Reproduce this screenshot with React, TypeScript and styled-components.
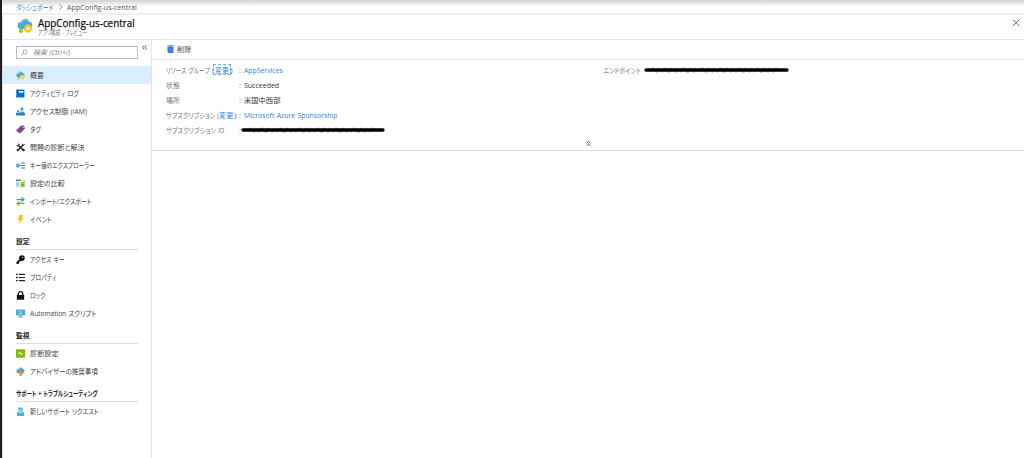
import React, { useLayoutEffect, useRef, useState } from 'react';
import styled, { createGlobalStyle, css } from 'styled-components';

const GlobalStyle = createGlobalStyle`
  * {
    box-sizing: border-box;
  }

  body {
    margin: 0;
    background: #fff;
    color: #444;
    font-family: 'Open Sans', 'Noto Sans CJK JP', sans-serif;
    font-size: 7.4px;
    line-height: 10px;
    font-feature-settings: 'palt';
    word-spacing: 0.6px;
    overflow: hidden;
  }
`;

const FitBox = styled.span<{ $width: number }>`
  display: block;
  flex: none;
  width: ${({ $width }) => $width}px;
  white-space: nowrap;
`;

const FitText = styled.span`
  display: inline-block;
  transform-origin: 0 50%;
`;

type FitProps = {
  width: number,
  children: React.ReactNode,
};

function Fit ({ children, width }: FitProps) {
  const ref = useRef<HTMLSpanElement>(null);
  const [scale, setScale] = useState(1);

  useLayoutEffect(() => {
    if (ref.current) {
      setScale(width / ref.current.offsetWidth);
    }
  }, [width]);

  return (
    <FitBox $width={width}>
      <FitText
        ref={ref}
        style={{ transform: `scaleX(${scale})` }}
      >
        {children}
      </FitText>
    </FitBox>
  );
}

const Page = styled.div`
  display: flex;
  flex-direction: column;
  height: 458px;
  border-left: 2px solid #1f1f21;
  box-shadow: inset 1px 0 0 #ddd;
`;

const Breadcrumb = styled.nav`
  display: flex;
  align-items: center;
  height: 15px;
  padding: 1px 0 0 14px;
  border-bottom: 2px solid #efefef;
  background: linear-gradient(#d6d6d6, #dedede 2px, #fff 6px);
  color: #555;

  svg {
    margin: 0 4px 0 5px;
  }
`;

const Link = styled.a`
  color: #2f80ea;
`;

const ChangeLink = styled(Link)<{ $focused?: boolean }>`
  ${({ $focused }) => $focused && css`
    height: 9px;
    padding: 0 1px;
    outline: 1px dashed #58bdea;
    outline-offset: -0.5px;
  `}
`;

const Header = styled.header`
  display: flex;
  height: 25px;
  padding: 3px 3px 0 15px;
  border-bottom: 1px solid #e4e4e4;
`;

const Titles = styled.div`
  flex: 1;
  margin: -1px 0 0 4.5px;
`;

const Title = styled.h1`
  margin: 0;
  color: #111;
  font-size: 10.4px;
  font-weight: 500;
  line-height: 12px;
  -webkit-text-stroke: 0.25px #111;
`;

const SubTitle = styled.div`
  color: #777;
  font-size: 6.3px;
  line-height: 7px;
`;

const Body = styled.div`
  display: flex;
  flex: 1;
  min-height: 0;
`;

const Sidebar = styled.aside`
  width: 150px;
  border-right: 1px solid #e4e4e4;
`;

const SearchRow = styled.div`
  display: flex;
  align-items: flex-start;
  height: 26px;
  padding: 6px 0 0 14px;

  > svg {
    margin: -2px 0 0 3px;
  }
`;

const SearchBox = styled.div`
  display: flex;
  align-items: center;
  width: 122px;
  height: 13px;
  padding-left: 4px;
  border: 1px solid #bdbdbd;
  color: #808080;
  font-size: 7px;
  font-style: italic;

  svg {
    margin-right: 5px;
  }
`;

const NavItem = styled.div<{ $active?: boolean }>`
  display: flex;
  align-items: center;
  gap: 5px;
  height: 18px;
  margin-left: 1px;
  padding-left: 12.5px;
  background: ${({ $active }) => $active ? '#daeeff' : 'transparent'};
`;

const NavHeading = styled.h2`
  height: 22px;
  margin: 0 13px 0 14px;
  padding-top: 9px;
  border-bottom: 1px solid #dedede;
  color: #222;
  font-size: 7px;
  font-weight: 700;
`;

const Main = styled.main`
  flex: 1;
`;

const Toolbar = styled.div`
  display: flex;
  align-items: center;
  gap: 3.5px;
  height: 20px;
  padding: 0 0 1px 14.5px;
  border-bottom: 1px solid #e4e4e4;
`;

const Essentials = styled.section`
  height: 91px;
  border-bottom: 1px solid #e0e0e0;
`;

const Columns = styled.div`
  display: grid;
  grid-template-columns: 437px 1fr;
  align-content: start;
  height: 80px;
  padding: 2px 0 0 14px;
`;

const Property = styled.div`
  display: flex;
  align-items: center;
  height: 15.1px;
`;

const PropertyLabel = styled.div<{ $width: number }>`
  display: flex;
  width: ${({ $width }) => $width}px;
  color: #777;
`;

const Colon = styled.span`
  width: 5px;
  color: #777;
`;

const PropertyValue = styled.div`
  color: #333;
`;

const RedactedValue = styled(PropertyValue)<{ $shift?: number }>`
  margin-left: ${({ $shift = 0 }) => $shift}px;
  padding-top: 1px;
`;

const CollapseRow = styled.div`
  display: flex;
  justify-content: center;
`;

function Cloud () {
  return (
    <>
      <path
        d='M4 11a3.500 3.500 0 0 1 0-7 4.600 4.600 0 0 1 8.600-.3A3.800 3.800 0 0 1 12.500 11z'
        fill='#4aa9d6'
      />
      <path
        d='M4 6a4.500 4.500 0 0 1 8-2.300'
        fill='none'
        stroke='#80cbe6'
      />
    </>
  );
}

function AppConfigIcon ({ size }: { size: number }) {
  return (
    <svg
      height={size}
      viewBox='0 0 16 16'
      width={size}
    >
      <Cloud />
      <circle
        cx='11'
        cy='10.500'
        fill='none'
        r='2.600'
        stroke='#f7c51e'
        strokeWidth='2.100'
      />
      <circle
        cx='11'
        cy='10.500'
        fill='#fff'
        r='1.600'
      />
      <circle
        cx='11'
        cy='10.500'
        fill='none'
        r='3.900'
        stroke='#f7c51e'
        strokeDasharray='1.530'
        strokeWidth='1.200'
      />
      <circle
        cx='4'
        cy='13'
        fill='#fff'
        r='1.300'
        stroke='#7fba00'
        strokeWidth='1.500'
      />
    </svg>
  );
}

const icons: Record<string, React.ReactNode> = {
  log: (
    <>
      <path d='M1 1h14v14H1z' fill='#0072c6' />
      <path d='M5 3.500h8v3H5z' fill='#fff' />
      <path d='M2 1v14' stroke='#0058a5' strokeWidth='2' />
    </>
  ),
  access: (
    <>
      <circle cx='10.500' cy='3.500' fill='#2d9bd0' r='2.800' />
      <path d='M6 11c0-5 9-5 9 0v3H6z' fill='#2d9bd0' />
      <circle cx='3.500' cy='7.500' fill='#2d9bd0' r='2' />
      <path d='M0 15v-3c0-3 6-3 7 0l9-1v4z' fill='#1883bd' />
      <path d='M9 7l1.500 3L12 7z' fill='#fff' />
    </>
  ),
  tag: (
    <>
      <path d='M8.500 1.500L14 1l2 5-8.500 9L0 10z' fill='#804998' />
      <circle cx='12.800' cy='4.200' fill='#fff' r='1' />
    </>
  ),
  tools: (
    <>
      <path d='M3 3l10.500 10.500M13 3L3 13.500' stroke='#222' strokeWidth='2.600' />
      <path d='M1 4.500l2 1.500 3-3L4.500 1M11 1.500L13 4l2.500-1.500' fill='none' stroke='#222' strokeWidth='1.700' />
      <path d='M12 11l3 3M2 14l2-2' stroke='#222' strokeWidth='3.500' />
    </>
  ),
  keys: (
    <>
      <circle cx='3.500' cy='8' fill='#fff' r='2.400' stroke='#209cd2' strokeWidth='2.200' />
      <path d='M9 3.500h7M9 8h7M9 12.500h7' stroke='#666' strokeWidth='1.800' />
      <path d='M5.500 8H9' stroke='#209cd2' strokeWidth='1.500' />
    </>
  ),
  compare: (
    <>
      <path d='M0.500 2h15v12H.5z' fill='#f4fafc' stroke='#8fbfcc' />
      <path d='M0 1h8v2.500H0z' fill='#308aa6' />
      <path d='M8.500 5h6.500v8.500H8.500z' fill='#7fba00' />
      <path d='M2 6v6M4.500 6v6' stroke='#3999c6' strokeWidth='1.200' />
      <path d='M10 6.500h3v2h-3z' fill='#e4f3be' />
    </>
  ),
  swap: (
    <>
      <path d='M1 4.500h12M10 1l4 3.500L10 8' fill='none' stroke='#269bd1' strokeWidth='2.200' />
      <path d='M15 11.500H3M6 8l-4 3.500L6 15' fill='none' stroke='#7fba00' strokeWidth='2.200' />
    </>
  ),
  bolt: <path d='M6 0h7L10 6h4L4 16l2.500-7H3z' fill='#fbc316' />,
  key: (
    <>
      <circle cx='10.500' cy='5.500' fill='#111' r='5' />
      <path d='M8 8l-6 6' stroke='#111' strokeWidth='3.500' />
      <path d='M1 12v4h4v-3z' fill='#111' />
      <circle cx='12' cy='4' fill='#fff' r='1.100' />
    </>
  ),
  list: (
    <>
      <path d='M5 2.500h11M5 8h11M5 13.500h11' stroke='#222' strokeWidth='2' />
      <path d='M0 2.500h3M0 8h3M0 13.500h3' stroke='#222' strokeWidth='2.400' />
    </>
  ),
  lock: (
    <>
      <path d='M1.500 7h13v8.500h-13z' fill='#111' />
      <path d='M4 8V5c0-5 8-5 8 0v3' fill='none' stroke='#111' strokeWidth='2.200' />
    </>
  ),
  script: (
    <>
      <path d='M0 1h16v10.500H0z' fill='#48aedb' />
      <path d='M6 11h4v3H6z' fill='#8b9ba3' />
      <path d='M4 14.500h8' stroke='#8b9ba3' strokeWidth='1.700' />
      <path d='M8 9V4M6 5.500L8 3.500l2 2M5.500 9h5' fill='none' stroke='#c4e6f4' strokeWidth='1.300' />
    </>
  ),
  pulse: (
    <>
      <path d='M0 0.500h16v15H0z' fill='#7fba00' />
      <path d='M3.500 8.500H5.500L7 5.500l2.500 5L10.500 8h2' fill='none' stroke='#fff' strokeWidth='1.400' />
    </>
  ),
  advisor: (
    <>
      <Cloud />
      <path d='M6 12.500L4.500 9.500c0-5 8-5 8 0L11 12.500z' fill='#f36f21' />
      <path d='M7 9l1.500 3L10 9z' fill='#ffce52' />
      <path d='M6.500 13h4v2.500h-4z' fill='#737c82' />
    </>
  ),
  support: (
    <>
      <circle cx='8' cy='4.500' fill='#45b1dc' r='4.200' />
      <path d='M2 16V11c0-1.500 1-2.500 2.500-2.500L8 11l3.500-2.500C13 8.500 14 9.500 14 11v5z' fill='#45b1dc' />
      <path d='M5.500 5.500h5' stroke='#fff' strokeWidth='1.500' />
    </>
  )
};

function NavIcon ({ name }: { name: string }) {
  if (name === 'appConfig') {
    return <AppConfigIcon size={9} />;
  }

  return (
    <svg
      height='9'
      viewBox='0 0 16 16'
      width='9'
    >
      {icons[name]}
    </svg>
  );
}

function DoubleChevron ({ up }: { up?: boolean }) {
  return (
    <svg
      height='7'
      viewBox='0 0 7 7'
      width='7'
    >
      <path
        d={up ? 'M1.500 3.300l2-1.800 2 1.800M1.500 5.800l2-1.800 2 1.800' : 'M3.300 1.500l-1.800 2 1.800 2M5.800 1.500L4 3.500l1.800 2'}
        fill='none'
        stroke='#444'
        strokeWidth='0.900'
      />
    </svg>
  );
}

const Marker = styled.svg`
  display: block;
`;

// Marker stroke hiding a value
function Redaction ({ width }: { width: number }) {
  const end = width - 2.5;

  return (
    <Marker
      height='8'
      viewBox={`0 0 ${width} 8`}
      width={width}
    >
      <path
        d={`M8 2.300H${end - 8}M12 5.900H${end - 12}`}
        stroke='#555'
        strokeDasharray='2 3.500 1 5 3 4'
        strokeWidth='0.700'
      />
      <path
        d={`M2 4H${end}`}
        stroke='#000'
        strokeLinecap='round'
        strokeWidth='3.300'
      />
    </Marker>
  );
}

type NavEntry = [icon: string, label: string, width: number];

const sections: { title?: string, titleWidth?: number, items: NavEntry[] }[] = [
  {
    items: [
      ['appConfig', '概要', 14],
      ['log', 'アクティビティ ログ', 48.5],
      ['access', 'アクセス制御 (IAM)', 57],
      ['tag', 'タグ', 11],
      ['tools', '問題の診断と解決', 54.5],
      ['keys', 'キー値のエクスプローラー', 65],
      ['compare', '設定の比較', 35],
      ['swap', 'インポート/エクスポート', 61.5],
      ['bolt', 'イベント', 21.5]
    ]
  },
  {
    title: '設定',
    titleWidth: 13.5,
    items: [
      ['key', 'アクセス キー', 35],
      ['list', 'プロパティ', 26.5],
      ['lock', 'ロック', 15.5],
      ['script', 'Automation スクリプト', 66.5]
    ]
  },
  {
    title: '監視',
    titleWidth: 13.5,
    items: [
      ['pulse', '診断設定', 29],
      ['advisor', 'アドバイザーの推奨事項', 67.5]
    ]
  },
  {
    title: 'サポート + トラブルシューティング',
    titleWidth: 82,
    items: [
      ['support', '新しいサポート リクエスト', 68.5]
    ]
  }
];

export default function App () {
  return (
    <Page>
      <GlobalStyle />
      <Breadcrumb>
        <Link><Fit width={37.5}>ダッシュボード</Fit></Link>
        <svg
          height='6'
          viewBox='0 0 4 6'
          width='4'
        >
          <path d='M.7.5L3.200 3 .7 5.500' fill='none' stroke='#666' strokeWidth='.8' />
        </svg>
        <Fit width={69.5}>AppConfig-us-central</Fit>
      </Breadcrumb>
      <Header>
        <AppConfigIcon size={16} />
        <Titles>
          <Title><Fit width={97}>AppConfig-us-central</Fit></Title>
          <SubTitle><Fit width={49.5}>アプリ構成 - プレビュー</Fit></SubTitle>
        </Titles>
        <svg
          height='9'
          viewBox='0 0 9 9'
          width='9'
        >
          <path d='M1 1.500l6.500 6.500M7.500 1.500L1 8' stroke='#555' strokeWidth='.9' />
        </svg>
      </Header>
      <Body>
        <Sidebar>
          <SearchRow>
            <SearchBox>
              <svg
                height='7'
                viewBox='0 0 7 7'
                width='7'
              >
                <circle cx='4' cy='3' fill='none' r='2' stroke='#888' strokeWidth='.7' />
                <path d='M2.500 4.500L.5 6.500' stroke='#888' strokeWidth='.8' />
              </svg>
              <Fit width={37.5}>検索 (Ctrl+/)</Fit>
            </SearchBox>
            <DoubleChevron />
          </SearchRow>
          {sections.map(({ items, title, titleWidth = 0 }) => (
            <React.Fragment key={title || 'general'}>
              {title && <NavHeading><Fit width={titleWidth}>{title}</Fit></NavHeading>}
              {items.map(([icon, label, width]) => (
                <NavItem
                  $active={icon === 'appConfig'}
                  key={label}
                >
                  <NavIcon name={icon} />
                  <Fit width={width}>{label}</Fit>
                </NavItem>
              ))}
            </React.Fragment>
          ))}
        </Sidebar>
        <Main>
          <Toolbar>
            <svg
              height='8'
              viewBox='0 0 7 8'
              width='7'
            >
              <path d='M.5 1.800h6V7l-.8 1H1.300L.5 7z' fill='#2f76df' />
              <path d='M.3.900h6.400M2.500.4h2' stroke='#2f76df' strokeWidth='.9' />
              <path d='M2.300 3v3.500M3.500 3v3.500M4.700 3v3.500' stroke='#78aaf0' strokeWidth='.4' />
            </svg>
            <Fit width={14.5}>削除</Fit>
          </Toolbar>
          <Essentials>
            <Columns>
              <div>
                <Property>
                  <PropertyLabel $width={73}>
                    <Fit width={47.5}>リソース グループ (</Fit>
                    <ChangeLink $focused><Fit width={14}>変更</Fit></ChangeLink>
                    <Fit width={2.5}>)</Fit>
                  </PropertyLabel>
                  <Colon>:</Colon>
                  <Link><Fit width={39}>AppServices</Fit></Link>
                </Property>
                <Property>
                  <PropertyLabel $width={73}><Fit width={14}>状態</Fit></PropertyLabel>
                  <Colon>:</Colon>
                  <PropertyValue><Fit width={35}>Succeeded</Fit></PropertyValue>
                </Property>
                <Property>
                  <PropertyLabel $width={73}><Fit width={14}>場所</Fit></PropertyLabel>
                  <Colon>:</Colon>
                  <PropertyValue><Fit width={36.5}>米国中西部</Fit></PropertyValue>
                </Property>
                <Property>
                  <PropertyLabel $width={73}>
                    <Fit width={53}>サブスクリプション (</Fit>
                    <ChangeLink><Fit width={14.5}>変更</Fit></ChangeLink>
                    <Fit width={2.5}>)</Fit>
                  </PropertyLabel>
                  <Colon>:</Colon>
                  <Link><Fit width={93}>Microsoft Azure Sponsorship</Fit></Link>
                </Property>
                <Property>
                  <PropertyLabel $width={73}><Fit width={58}>サブスクリプション ID</Fit></PropertyLabel>
                  <Colon>:</Colon>
                  <RedactedValue $shift={-3}><Redaction width={144.5} /></RedactedValue>
                </Property>
              </div>
              <div>
                <Property>
                  <PropertyLabel $width={41}><Fit width={37.5}>エンドポイント</Fit></PropertyLabel>
                  <RedactedValue><Redaction width={145.5} /></RedactedValue>
                </Property>
              </div>
            </Columns>
            <CollapseRow>
              <DoubleChevron up />
            </CollapseRow>
          </Essentials>
        </Main>
      </Body>
    </Page>
  );
}
